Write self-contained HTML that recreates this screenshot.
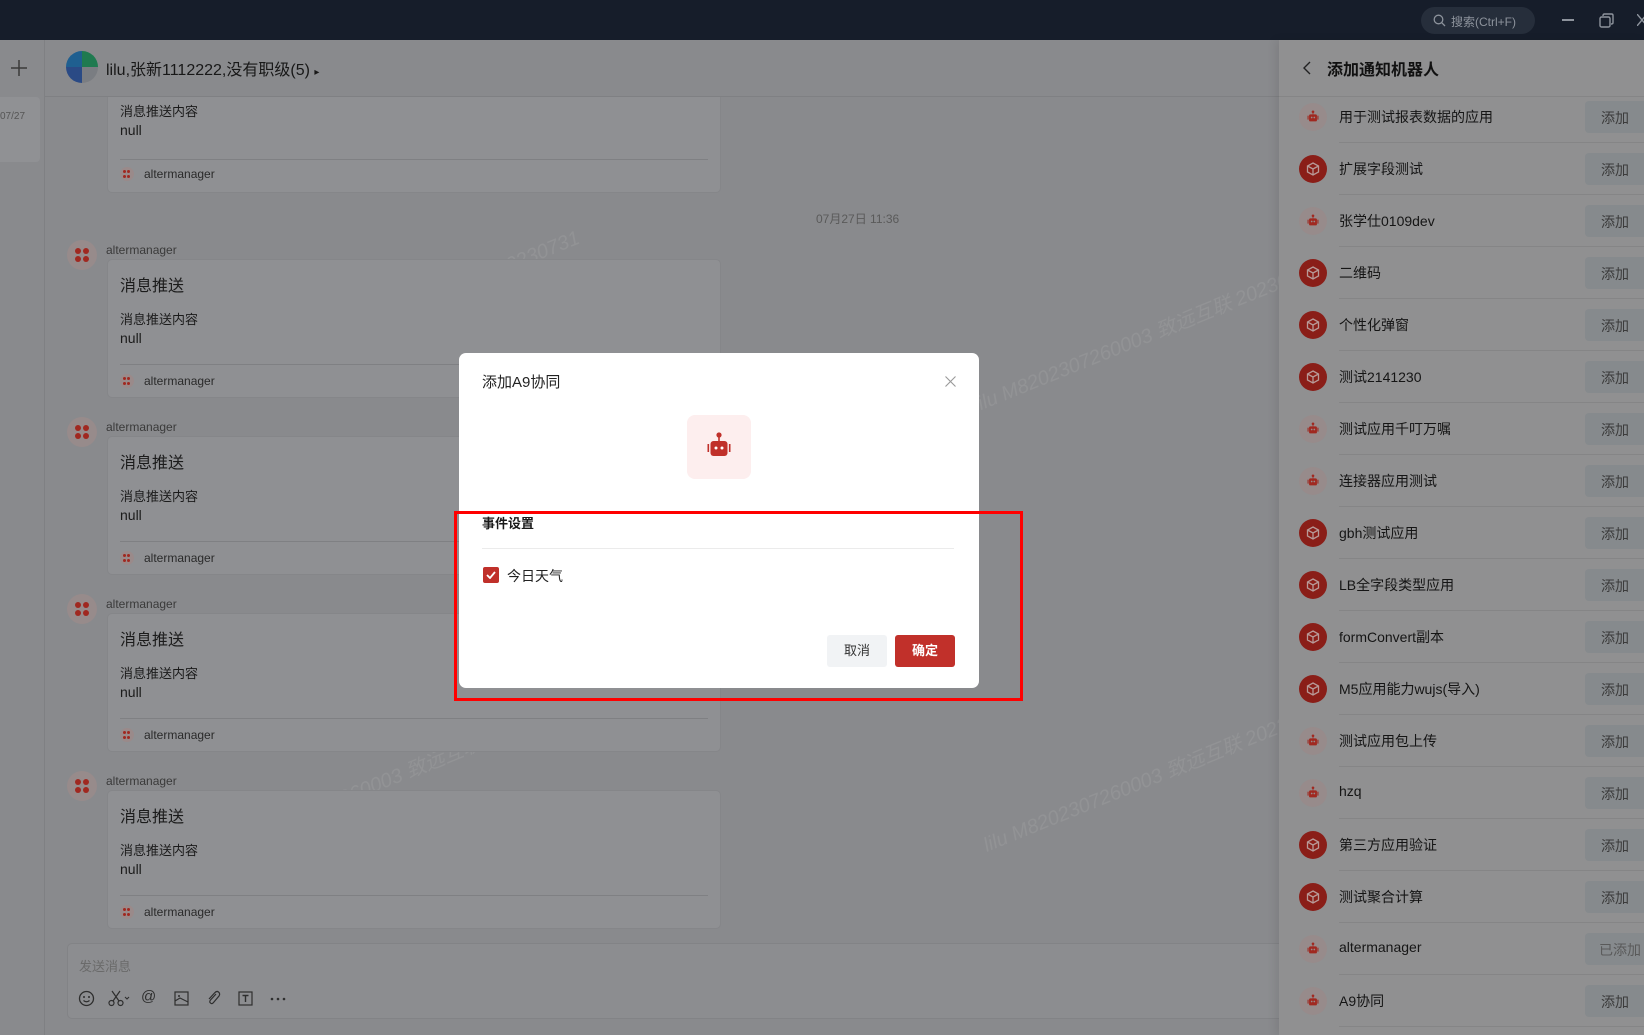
<!DOCTYPE html>
<html><head><meta charset="utf-8"><style>
*{box-sizing:border-box;margin:0;padding:0}
body{width:1644px;height:1035px;overflow:hidden;position:relative;background:#898a8d;font-family:"Liberation Sans","Noto Sans CJK SC",sans-serif;color:#1b1b1b}
.abs{position:absolute}
.top{left:0;top:0;width:1644px;height:40px;background:#161d2a}
.rail{left:0;top:40px;width:45px;height:995px;background:#898a8d;border-right:1px solid #7f8083}
.chathead{left:45px;top:40px;width:1234px;height:57px;border-bottom:1px solid #7f8083}
.card{position:absolute;left:107px;width:614px;background:#8f9093;border:1px solid #858689;border-radius:5px}
.card .t{position:absolute;left:12px;font-size:16px}
.card .s{position:absolute;left:12px;font-size:13px}
.card .n{position:absolute;left:12px;font-size:14px}
.card .hr{position:absolute;left:12px;right:12px;height:1px;background:#7f8083}
.card .f{position:absolute;left:12px;font-size:12px;color:#2a2a2a;display:flex;align-items:center;gap:10px}
.dots{width:14px;height:14px;border-radius:50%;background:#9a8a8a;display:flex;flex-wrap:wrap;padding:3px 3px;gap:1px}
.dots i{width:3px;height:3px;border-radius:50%;background:#a02820}
.av{position:absolute;left:67px;width:30px;height:30px;border-radius:50%;background:#978b8b;display:flex;flex-wrap:wrap;padding:8px 8px;gap:2px}
.av i{width:6px;height:6px;border-radius:50%;background:#a02820}
.nm{position:absolute;left:106px;font-size:12px;color:#3a3a3a}
.panel{left:1279px;top:40px;width:365px;height:995px;background:#909091;box-shadow:-4px 0 8px rgba(0,0,0,.08)}
.row{position:absolute;left:0;width:365px;height:52px}
.row .ic{position:absolute;left:20px;top:12px;width:28px;height:28px;border-radius:50%}
.row .lb{position:absolute;left:60px;top:16px;font-size:14px;color:#151515}
.row .bt{position:absolute;left:306px;top:10px;width:70px;height:32px;background:#868a8d;border-radius:4px;font-size:14px;color:#3b3b3b;padding:7px 0 0 16px;white-space:nowrap}
.row .ln{position:absolute;left:60px;right:0;bottom:0;height:1px;background:#858586}
.ic.p{background:#978b8b}
.ic.d{background:#8a1e18}
.wm{position:absolute;font-size:20px;color:rgba(255,255,255,.08);transform:rotate(-22deg);white-space:nowrap;font-style:italic}
.modal{left:459px;top:353px;width:520px;height:335px;background:#fff;border-radius:7px}
</style></head><body>
<div class="abs top">
 <div class="abs" style="left:1421px;top:7px;width:114px;height:27px;border-radius:14px;background:#262e3b;color:#8d939c;font-size:12px;padding:6px 0 0 30px">搜索(Ctrl+F)</div>
 <svg class="abs" style="left:1433px;top:14px" width="13" height="13" viewBox="0 0 13 13"><circle cx="5.5" cy="5.5" r="4.3" fill="none" stroke="#8d939c" stroke-width="1.3"/><path d="M8.6 8.6L12 12" stroke="#8d939c" stroke-width="1.3"/></svg>
 <div class="abs" style="left:1562px;top:19px;width:12px;height:1.5px;background:#8d939c"></div>
 <svg class="abs" style="left:1599px;top:13px" width="15" height="15" viewBox="0 0 15 15"><rect x="1" y="4" width="10" height="10" rx="1.5" fill="none" stroke="#8d939c" stroke-width="1.4"/><path d="M4 3V2.5Q4 1 5.5 1H12.5Q14 1 14 2.5V9.5Q14 11 12.5 11H12" fill="none" stroke="#8d939c" stroke-width="1.4"/></svg>
 <svg class="abs" style="left:1637px;top:14px" width="10" height="12"><path d="M0 0L10 12M10 0L0 12" stroke="#8d939c" stroke-width="1.4"/></svg>
</div>
<div class="abs rail">
 <svg class="abs" style="left:11px;top:20px" width="16" height="16"><path d="M8 0V16M0 8H16" stroke="#3a3a3a" stroke-width="1.5"/></svg>
 <div class="abs" style="left:0;top:57px;width:40px;height:65px;background:#909194;border-radius:0 4px 4px 0;font-size:10px;color:#555;padding:14px 0 0 0">07/27</div>
</div>
<div class="abs chathead">
 <div class="abs" style="left:21px;top:11px;width:32px;height:32px;border-radius:50%;overflow:hidden">
  <div class="abs" style="left:0;top:0;width:16px;height:16px;background:#1f5f90"></div>
  <div class="abs" style="left:16px;top:0;width:16px;height:16px;background:#1f7a50"></div>
  <div class="abs" style="left:0;top:16px;width:16px;height:16px;background:#2a4a85"></div>
  <div class="abs" style="left:16px;top:16px;width:16px;height:16px;background:#7a7d82"></div>
 </div>
 <div class="abs" style="left:61px;top:16px;font-size:16px;color:#181818">lilu,张新1112222,没有职级(5) <span style="font-size:10px">▸</span></div>
</div>

<div class="wm" style="left:220px;top:290px">lilu M8202307260003 致远互联 20230731</div>
<div class="wm" style="left:960px;top:320px">lilu M8202307260003 致远互联 20230731</div>
<div class="wm" style="left:210px;top:760px">lilu M8202307260003 致远互联 20230731</div>
<div class="wm" style="left:970px;top:760px">lilu M8202307260003 致远互联 20230731</div>

<div class="card" style="top:97px;height:96px;border-top:none;border-radius:0 0 5px 5px">
 <div class="s" style="top:4px">消息推送内容</div><div class="n" style="top:25px">null</div>
 <div class="hr" style="top:62px"></div>
 <div class="f" style="top:70px"><span class="dots"><i></i><i></i><i></i><i></i></span>altermanager</div>
</div>
<div class="abs" style="left:816px;top:210px;font-size:12px;color:#5a5a5a">07月27日 11:36</div>

<div class="av" style="top:240px"><i></i><i></i><i></i><i></i></div><div class="nm" style="top:243px">altermanager</div>
<div class="card" style="top:259px;height:139px">
 <div class="t" style="top:12px">消息推送</div><div class="s" style="top:49px">消息推送内容</div><div class="n" style="top:70px">null</div>
 <div class="hr" style="top:104px"></div>
 <div class="f" style="top:114px"><span class="dots"><i></i><i></i><i></i><i></i></span>altermanager</div>
</div>
<div class="av" style="top:417px"><i></i><i></i><i></i><i></i></div><div class="nm" style="top:420px">altermanager</div>
<div class="card" style="top:436px;height:139px">
 <div class="t" style="top:12px">消息推送</div><div class="s" style="top:49px">消息推送内容</div><div class="n" style="top:70px">null</div>
 <div class="hr" style="top:104px"></div>
 <div class="f" style="top:114px"><span class="dots"><i></i><i></i><i></i><i></i></span>altermanager</div>
</div>
<div class="av" style="top:594px"><i></i><i></i><i></i><i></i></div><div class="nm" style="top:597px">altermanager</div>
<div class="card" style="top:613px;height:139px">
 <div class="t" style="top:12px">消息推送</div><div class="s" style="top:49px">消息推送内容</div><div class="n" style="top:70px">null</div>
 <div class="hr" style="top:104px"></div>
 <div class="f" style="top:114px"><span class="dots"><i></i><i></i><i></i><i></i></span>altermanager</div>
</div>
<div class="av" style="top:771px"><i></i><i></i><i></i><i></i></div><div class="nm" style="top:774px">altermanager</div>
<div class="card" style="top:790px;height:139px">
 <div class="t" style="top:12px">消息推送</div><div class="s" style="top:49px">消息推送内容</div><div class="n" style="top:70px">null</div>
 <div class="hr" style="top:104px"></div>
 <div class="f" style="top:114px"><span class="dots"><i></i><i></i><i></i><i></i></span>altermanager</div>
</div>

<div class="abs" style="left:67px;top:943px;width:1230px;height:76px;background:#8c8d90;border:1px solid #828386;border-radius:5px">
 <div class="abs" style="left:11px;top:12px;font-size:13px;color:#6a6a6a">发送消息</div>
 <div class="abs" style="left:10px;top:46px;font-size:15px;color:#2e2e2e;white-space:nowrap">
  <svg width="17" height="17" style="position:absolute;left:0;top:0"><circle cx="8.5" cy="8.5" r="7" fill="none" stroke="#2e2e2e" stroke-width="1.3"/><circle cx="6" cy="7" r="1" fill="#2e2e2e"/><circle cx="11" cy="7" r="1" fill="#2e2e2e"/><path d="M5.5 10.5Q8.5 13 11.5 10.5" fill="none" stroke="#2e2e2e" stroke-width="1.2"/></svg>
  <svg width="24" height="17" style="position:absolute;left:30px;top:0"><circle cx="3.5" cy="13" r="2.5" fill="none" stroke="#2e2e2e" stroke-width="1.2"/><circle cx="12.5" cy="13" r="2.5" fill="none" stroke="#2e2e2e" stroke-width="1.2"/><path d="M5 11L12 1M11 11L4 1" stroke="#2e2e2e" stroke-width="1.2"/><path d="M17 7L19 9L21 7" fill="none" stroke="#2e2e2e" stroke-width="1.1"/></svg>
  <span style="position:absolute;left:63px;top:-2px">@</span>
  <svg width="15" height="15" style="position:absolute;left:96px;top:1px"><rect x="1" y="1" width="13" height="13" fill="none" stroke="#2e2e2e" stroke-width="1.2"/><path d="M1 10L6 7L14 11" fill="none" stroke="#2e2e2e" stroke-width="1.1"/><circle cx="5" cy="5" r="1" fill="#2e2e2e"/></svg>
  <svg width="15" height="16" style="position:absolute;left:128px;top:0"><path d="M10 4L4.5 10Q3 12 4.5 13Q6 14.5 7.5 12.5L13 6Q14.5 3.5 12.5 2Q10.5 0.5 8.5 3L3 9" fill="none" stroke="#2e2e2e" stroke-width="1.2"/></svg>
  <svg width="15" height="15" style="position:absolute;left:160px;top:1px"><rect x="1" y="1" width="13" height="13" fill="none" stroke="#2e2e2e" stroke-width="1.2"/><path d="M4.5 4.5H10.5M7.5 4.5V11" stroke="#2e2e2e" stroke-width="1.4"/></svg>
  <svg width="16" height="4" style="position:absolute;left:192px;top:7px"><circle cx="2" cy="2" r="1.3" fill="#2e2e2e"/><circle cx="8" cy="2" r="1.3" fill="#2e2e2e"/><circle cx="14" cy="2" r="1.3" fill="#2e2e2e"/></svg>
 </div>
</div>

<div class="abs panel">
 <div class="abs" style="left:0;top:0;width:365px;height:57px;border-bottom:1px solid #858586">
  <svg class="abs" style="left:23px;top:21px" width="9" height="14"><path d="M8 1L2 7L8 13" fill="none" stroke="#222" stroke-width="1.4"/></svg>
  <div class="abs" style="left:48px;top:16px;font-size:16px;font-weight:bold;color:#111">添加通知机器人</div>
 </div>
 <div id="rows"></div>
</div>

<div class="abs modal">
 <div class="abs" style="left:23px;top:18px;font-size:15px;color:#222">添加A9协同</div>
 <svg class="abs" style="left:486px;top:23px" width="11" height="11"><path d="M0.5 0.5L10.5 10.5M10.5 0.5L0.5 10.5" stroke="#999" stroke-width="1.1"/></svg>
 <div class="abs" style="left:228px;top:62px;width:64px;height:64px;background:#fdeeee;border-radius:8px">
  <svg class="abs" style="left:16px;top:16px" width="32" height="32" viewBox="0 0 32 32"><circle cx="16" cy="4" r="2.6" fill="#c0302a"/><rect x="15.2" y="5" width="1.6" height="5" fill="#c0302a"/><rect x="7.5" y="10" width="17" height="15" rx="3" fill="#c0302a"/><rect x="4.5" y="13" width="1.6" height="8" fill="#c0302a"/><rect x="25.9" y="13" width="1.6" height="8" fill="#c0302a"/><circle cx="13" cy="17" r="1.5" fill="#fff"/><circle cx="19" cy="17" r="1.5" fill="#fff"/></svg>
 </div>
 <div class="abs" style="left:23px;top:160px;font-size:13px;font-weight:bold;color:#1a1a1a">事件设置</div>
 <div class="abs" style="left:23px;top:195px;width:472px;height:1px;background:#ebebeb"></div>
 <div class="abs" style="left:24px;top:214px;width:16px;height:16px;background:#c0302a;border-radius:2px">
  <svg class="abs" style="left:3px;top:4px" width="10" height="8"><path d="M1 4L4 7L9 1" fill="none" stroke="#fff" stroke-width="1.8"/></svg>
 </div>
 <div class="abs" style="left:48px;top:213px;font-size:14px;color:#222">今日天气</div>
 <div class="abs" style="left:368px;top:282px;width:60px;height:32px;background:#f1f3f5;border-radius:3px;font-size:13px;color:#333;text-align:center;line-height:32px">取消</div>
 <div class="abs" style="left:436px;top:282px;width:60px;height:32px;background:#c1302a;border-radius:3px;font-size:13px;color:#fff;text-align:center;line-height:32px;font-weight:bold">确定</div>
</div>
<div class="abs" style="left:454px;top:511px;width:569px;height:190px;border:3px solid #ff0000"></div>

<script>
var items=[["用于测试报表数据的应用","p"],["扩展字段测试","d"],["张学仕0109dev","p"],["二维码","d"],["个性化弹窗","d"],["测试2141230","d"],["测试应用千叮万嘱","p"],["连接器应用测试","p"],["gbh测试应用","d"],["LB全字段类型应用","d"],["formConvert副本","d"],["M5应用能力wujs(导入)","d"],["测试应用包上传","p"],["hzq","p"],["第三方应用验证","d"],["测试聚合计算","d"],["altermanager","p"],["A9协同","p"]];
var robot='<svg style="position:absolute;left:7px;top:7px" width="14" height="14" viewBox="0 0 32 32"><circle cx="16" cy="4" r="3" fill="#a02820"/><rect x="15" y="5" width="2" height="5" fill="#a02820"/><rect x="7" y="10" width="18" height="16" rx="3" fill="#a02820"/><rect x="3.5" y="13" width="2.5" height="9" fill="#a02820"/><rect x="26" y="13" width="2.5" height="9" fill="#a02820"/><circle cx="13" cy="17" r="2" fill="#978b8b"/><circle cx="19" cy="17" r="2" fill="#978b8b"/></svg>';
var cube='<svg style="position:absolute;left:7px;top:7px" width="14" height="14" viewBox="0 0 14 14"><path d="M7 1L12.5 4V10L7 13L1.5 10V4Z M1.5 4L7 7L12.5 4 M7 7V13" fill="none" stroke="#b89a98" stroke-width="1.3"/></svg>';
var h='';
items.forEach(function(it,i){
 var top=51+i*52;
 h+='<div class="row" style="top:'+top+'px"><div class="ic '+it[1]+'">'+(it[1]=='p'?robot:cube)+'</div><div class="lb">'+it[0]+'</div><div class="bt"'+(i==16?' style="padding-left:14px;color:#5a5a5a"':'')+'>'+(i==16?'已添加':'添加')+'</div><div class="ln"></div></div>';
});
document.getElementById('rows').innerHTML=h;
</script>
</body></html>
